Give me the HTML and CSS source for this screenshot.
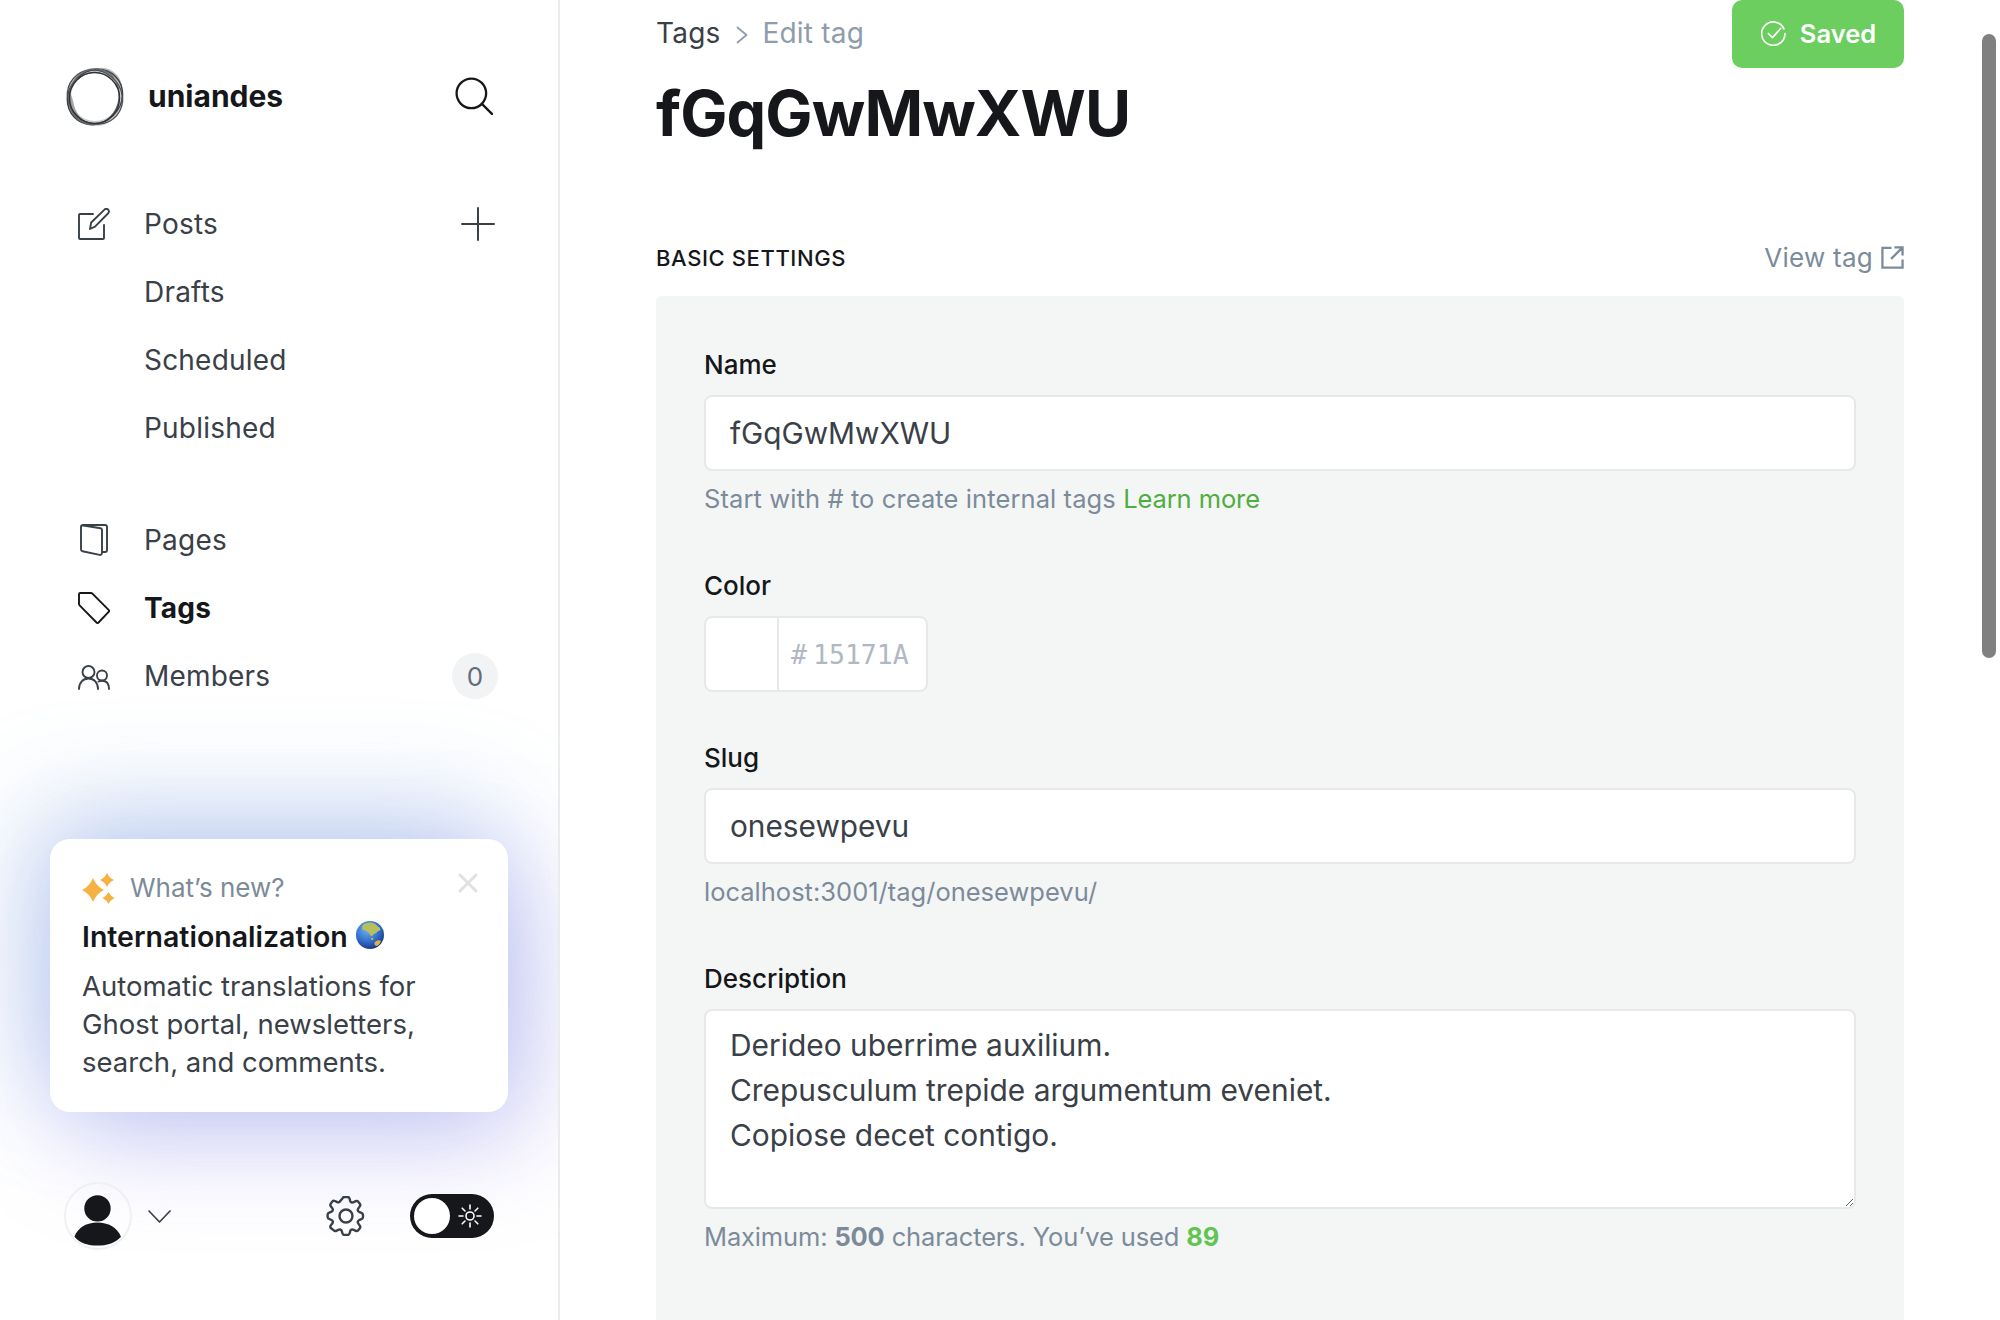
FILE: index.html
```html
<!DOCTYPE html>
<html lang="en">
<head>
    <meta charset="UTF-8">
    <meta name="viewport" content="width=device-width, initial-scale=1.0">
    <title>Edit tag</title>
    <link rel="stylesheet" href="styles.css">
</head>
<body>
    <div class="app">
        <aside class="sidebar">
            <div class="brand">
                <svg class="logo" viewBox="0 0 62 62" fill="none">
                    <path d="M30 5c6-4 15-3 22 4 4 4 6 9 6 14-3-7-8-12-13-14-5-2-10-3-15-4z" fill="#b4b6b8"/>
                    <path d="M4 24c-3 10-1 20 6 28 4 4 9 6 14 7-7-5-12-11-14-19-1-6-3-11-6-16z" fill="#a6a8aa"/>
                    <ellipse cx="31" cy="32" rx="26.500" ry="26.500" stroke="#8a8c8f" stroke-width="5" opacity="0.450"/>
                    <ellipse cx="31" cy="32" rx="29" ry="26" stroke="#3d4043" stroke-width="1.300" transform="rotate(-45 31 32)"/>
                    <ellipse cx="31" cy="32" rx="28.500" ry="26" stroke="#4b4e52" stroke-width="1.300" transform="rotate(40 31 32)"/>
                    <ellipse cx="30" cy="32" rx="25" ry="28" stroke="#66696c" stroke-width="1.300" transform="rotate(15 31 32)"/>
                    <ellipse cx="30.500" cy="33" rx="25" ry="25.500" stroke="#2f3235" stroke-width="1.400"/>
                </svg>
                <span class="brand-name">uniandes</span>
                <svg class="search-icon" viewBox="0 0 36 36" fill="none" stroke="#15171a" stroke-width="2.200" stroke-linecap="round">
                    <circle cx="15.500" cy="15.500" r="14"/>
                    <path d="M25.500 25.500 35 35"/>
                </svg>
            </div>

            <ul class="nav nav-first">
                <li class="nav-item">
                    <svg class="nav-icon" viewBox="0 0 32 32" fill="none" stroke="#394047" stroke-width="1.900" stroke-linecap="round" stroke-linejoin="round">
                        <path d="M15 6H2a1 1 0 0 0-1 1v23a1 1 0 0 0 1 1h23a1 1 0 0 0 1-1V17"/>
                        <path d="M12 21l1.200-6.500L26.500 1.600a2.600 2.600 0 0 1 3.700 0 2.600 2.600 0 0 1 0 3.700L17 18.600z"/>
                    </svg>
                    <span class="nav-label">Posts</span>
                    <svg class="plus-icon" viewBox="0 0 34 34" fill="none" stroke="#394047" stroke-width="2" stroke-linecap="round">
                        <path d="M17 1v32M1 17h32"/>
                    </svg>
                </li>
                <li class="nav-item"><span class="nav-label">Drafts</span></li>
                <li class="nav-item"><span class="nav-label">Scheduled</span></li>
                <li class="nav-item"><span class="nav-label">Published</span></li>
            </ul>

            <ul class="nav nav-second">
                <li class="nav-item">
                    <svg class="nav-icon" viewBox="0 0 32 32" fill="none" stroke="#394047" stroke-width="1.900" stroke-linecap="round" stroke-linejoin="round">
                        <path d="M5 1h22a2 2 0 0 1 2 2v23a2 2 0 0 1-2 2h-3"/>
                        <path d="M4 1.300l18.600 3a1.500 1.500 0 0 1 1.400 1.500V29a2 2 0 0 1-2.400 1.900L4.500 27.200A1.800 1.800 0 0 1 3 25.400V2.300a1 1 0 0 1 1-1z"/>
                    </svg>
                    <span class="nav-label">Pages</span>
                </li>
                <li class="nav-item">
                    <svg class="nav-icon" viewBox="0 0 32 32" fill="none" stroke="#15171a" stroke-width="1.900" stroke-linejoin="round">
                        <path d="M2.200 1H13a2 2 0 0 1 1.400.6l16.200 16.200a1.500 1.500 0 0 1 0 2.100L20.600 30.500a1.500 1.500 0 0 1-2.100 0L1.600 13.400A2 2 0 0 1 1 12V2.200A1.200 1.200 0 0 1 2.200 1z"/>
                    </svg>
                    <span class="nav-label nav-active">Tags</span>
                </li>
                <li class="nav-item">
                    <svg class="nav-icon" viewBox="0 0 32 32" fill="none" stroke="#394047" stroke-width="1.900" stroke-linecap="round">
                        <circle cx="10.500" cy="12" r="6"/>
                        <path d="M1 29c0-6.500 4-10.500 9.500-10.500S20 22.500 20 29"/>
                        <circle cx="24" cy="15.500" r="5"/>
                        <path d="M20.500 21.500c1-.5 2.200-.8 3.500-.8 4.500 0 7 3.300 7 8.300"/>
                    </svg>
                    <span class="nav-label">Members</span>
                    <span class="count">0</span>
                </li>
            </ul>

            <div class="news-card">
                <div class="news-top">
                    <svg class="sparkle" viewBox="0 0 33 32" fill="#f6b143">
                        <path d="M11 5Q14.500 13.500 22 17 14.500 20.500 11 29 7.500 20.500 0 17 7.500 13.500 11 5z"/>
                        <path d="M25 0Q27.200 4.800 32 7 27.200 9.200 25 14 22.800 9.200 18 7 22.800 4.800 25 0z"/>
                        <path d="M26.500 19Q28.500 23 32.500 25 28.500 27 26.500 31 24.500 27 20.500 25 24.500 23 26.500 19z"/>
                    </svg>
                    <span class="news-kicker">What’s new?</span>
                    <svg class="close-icon" viewBox="0 0 20 20" fill="none" stroke="#dfe1e3" stroke-width="3" stroke-linecap="round">
                        <path d="M2 2l16 16M18 2 2 18"/>
                    </svg>
                </div>
                <div class="news-title">
                    Internationalization
                    <svg class="globe" viewBox="0 0 28 28">
                        <defs>
                            <radialGradient id="sea" cx="40%" cy="30%" r="75%">
                                <stop offset="0" stop-color="#6fb4f2"/>
                                <stop offset="0.6" stop-color="#2f6cc8"/>
                                <stop offset="1" stop-color="#17307c"/>
                            </radialGradient>
                        </defs>
                        <circle cx="14" cy="14" r="14" fill="url(#sea)"/>
                        <path d="M8 3c4-2 8-2 11 0 2 1 3 3 5 4 1 2 0 3-2 3-1 2-3 2-4 3l-2 2c-2 0-2-2-3-3-2-1-3-3-5-3-1 0-2 0-2-2s1-3 2-4z" fill="#b7bf5e"/>
                        <path d="M15 17c2-1 3 1 2 2-1 0-2 0-2-2zM19 21c2-2 5-2 6-1-1 3-3 5-5 5-2-1-2-3-1-4z" fill="#dcae4e"/>
                    </svg>
                </div>
                <p class="news-text">Automatic translations for<br>Ghost portal, newsletters,<br>search, and comments.</p>
            </div>

            <div class="user-bar">
                <div class="avatar">
                    <svg viewBox="0 0 68 68">
                        <circle cx="34.500" cy="27" r="14" fill="#15171a"/>
                        <path d="M10 57c4-10 13-15 24.500-15S55 47 59.500 57C53 64 44 66.500 34.500 66.500S16 64 10 57z" fill="#15171a"/>
                    </svg>
                </div>
                <svg class="chevron" viewBox="0 0 23 13" fill="none" stroke="#394047" stroke-width="1.700" stroke-linecap="round" stroke-linejoin="round">
                    <path d="M1 1l10.500 11L22 1"/>
                </svg>
                <svg class="gear" viewBox="0 0 40 40" fill="none" stroke="#394047" stroke-width="2.400" stroke-linejoin="round">
                    <circle cx="20" cy="20" r="6.500"/>
                    <path d="M16.500 2.500c.3-1 1-1.500 2-1.500h3c1 0 1.700.5 2 1.500l.8 2.600c.4 1.200 1.800 1.800 3 1.200l2.400-1.100c1-.4 1.800-.3 2.500.4l1.600 2.200c.6.800.6 1.800 0 2.600l-1.600 2.200c-.8 1.100-.4 2.600.8 3.200l2.400 1c1 .4 1.600 1.100 1.600 2.200v2c0 1-.6 1.800-1.600 2.200l-2.400 1c-1.200.6-1.600 2.100-.8 3.200l1.600 2.200c.6.800.6 1.800 0 2.600l-1.600 2.200c-.7.700-1.500.8-2.500.4l-2.400-1.100c-1.200-.6-2.600 0-3 1.200l-.8 2.600c-.3 1-1 1.500-2 1.500h-3c-1 0-1.700-.5-2-1.500l-.8-2.600c-.4-1.200-1.800-1.800-3-1.200l-2.400 1.100c-1 .4-1.800.3-2.500-.4L4.800 32c-.6-.8-.6-1.800 0-2.600l1.600-2.200c.8-1.100.4-2.600-.8-3.200l-2.400-1C2.200 22.600 1.600 21.800 1.600 20.800v-2c0-1 .6-1.800 1.600-2.200l2.400-1c1.200-.6 1.600-2.100.8-3.200L4.800 10.200c-.6-.8-.6-1.800 0-2.600l1.600-2.200c.7-.7 1.500-.8 2.500-.4l2.400 1.100c1.200.6 2.600 0 3-1.200z"/>
                </svg>
                <div class="theme-toggle">
                    <span class="knob"></span>
                    <svg class="sun" viewBox="0 0 24 24" fill="none" stroke="#fff" stroke-width="1.600" stroke-linecap="round">
                        <circle cx="12" cy="12" r="4"/>
                        <path d="M12 1v4M12 19v4M1 12h4M19 12h4M4.200 4.200l2.800 2.800M17 17l2.800 2.800M4.200 19.800 7 17M17 7l2.800-2.800"/>
                    </svg>
                </div>
            </div>
        </aside>

        <main class="main">
            <div class="top-row">
                <div class="crumbs">
                    <span class="crumb-link">Tags</span>
                    <svg class="crumb-arrow" viewBox="0 0 12 18" fill="none" stroke="#8e9cac" stroke-width="1.800" stroke-linecap="round" stroke-linejoin="round">
                        <path d="M1.500 1.500 10.500 9l-9 7.500"/>
                    </svg>
                    <span class="crumb-current">Edit tag</span>
                </div>
                <div class="saved-btn">
                    <svg class="check-icon" viewBox="0 0 24 24" fill="none" stroke="#fff" stroke-width="1.600" stroke-linecap="round" stroke-linejoin="round">
                        <path d="M22 7.500A11.200 11.200 0 1 0 23 12"/>
                        <path d="M7 12l4 4 8-9"/>
                    </svg>
                    Saved
                </div>
            </div>
            <h1 class="title">fGqGwMwXWU</h1>

            <div class="section-head">
                <h4 class="section-title">BASIC SETTINGS</h4>
                <span class="view-link">
                    View tag
                    <svg class="ext-icon" viewBox="0 0 24 24" fill="none" stroke="#7c8b9a" stroke-width="2.400">
                        <path d="M11 2H1.500v20.500h21V14M14 1.500h8.500V10M22.500 1.500 10.500 13.500"/>
                    </svg>
                </span>
            </div>

            <section class="panel">
                <div class="field">
                    <label class="field-label">Name</label>
                    <input class="text-input" type="text" value="fGqGwMwXWU">
                    <p class="hint hint-wide">Start with # to create internal tags <span class="green-link">Learn more</span></p>
                </div>
                <div class="field field-color">
                    <label class="field-label">Color</label>
                    <div class="color-box">
                        <div class="swatch"></div>
                        <div class="hex"><span>#</span><span>15171A</span></div>
                    </div>
                </div>
                <div class="field">
                    <label class="field-label">Slug</label>
                    <input class="text-input" type="text" value="onesewpevu">
                    <p class="hint">localhost:3001/tag/onesewpevu/</p>
                </div>
                <div class="field">
                    <label class="field-label">Description</label>
                    <textarea class="text-area">Derideo uberrime auxilium.
Crepusculum trepide argumentum eveniet.
Copiose decet contigo.</textarea>
                    <p class="hint hint-count">Maximum: <b>500</b> characters. You’ve used <b class="used">89</b></p>
                </div>
            </section>
        </main>

        <div class="scroll-track"><div class="scroll-thumb"></div></div>
    </div>
</body>
</html>
```

FILE: styles.css
```css
* {
    box-sizing: border-box;
}
html, body {
    margin: 0;
    height: 1320px;
    overflow: hidden;
    background: #fff;
}
body {
    font-family: Inter, "Liberation Sans", sans-serif;
    color: #15171a;
}
.app {
    display: flex;
    height: 1320px;
}

/* sidebar */
.sidebar {
    width: 560px;
    flex: none;
    height: 1320px;
    border-right: 2px solid #e9ebed;
    overflow: hidden;
    padding: 60px 60px 0 50px;
    display: flex;
    flex-direction: column;
}
.brand {
    display: flex;
    align-items: center;
    height: 72px;
    padding-left: 14px;
}
.logo {
    width: 62px;
    height: 62px;
    flex: none;
}
.brand-name {
    font-size: 30px;
    font-weight: 700;
    margin-left: 22px;
    flex: 1;
}
.search-icon {
    width: 38px;
    height: 38px;
    margin-right: 5px;
}
.nav {
    list-style: none;
    margin: 0;
    padding: 0;
}
.nav-first {
    margin-top: 58px;
}
.nav-second {
    margin-top: 44px;
}
.nav-item {
    display: flex;
    align-items: center;
    height: 68px;
    padding-left: 94px;
    position: relative;
}
.nav-icon {
    position: absolute;
    left: 28px;
    top: 18px;
    width: 32px;
    height: 32px;
}
.nav-label {
    font-size: 28px;
    letter-spacing: 0.2px;
    color: #394047;
    flex: 1;
}
.nav-active {
    font-weight: 700;
    color: #15171a;
}
.plus-icon {
    width: 34px;
    height: 34px;
    margin-right: 3px;
}
.count {
    width: 46px;
    height: 46px;
    border-radius: 50%;
    background: #f1f3f4;
    color: #626d79;
    font-size: 26px;
    display: flex;
    align-items: center;
    justify-content: center;
}
.news-card {
    margin-top: 129px;
    width: 458px;
    height: 273px;
    border-radius: 20px;
    background: #fff;
    padding: 31px 32px;
    box-shadow: -18px -26px 105px rgba(120, 165, 225, 0.42), 20px 26px 105px rgba(150, 135, 235, 0.42);
    flex: none;
}
.news-top {
    display: flex;
    align-items: center;
    height: 34px;
}
.sparkle {
    width: 33px;
    height: 32px;
    margin-top: 4px;
}
.news-kicker {
    font-size: 26px;
    color: #7c8b9a;
    margin-left: 15px;
    flex: 1;
}
.close-icon {
    width: 20px;
    height: 20px;
    margin: -8px -2px 0 0;
}
.news-title {
    display: flex;
    align-items: center;
    gap: 8px;
    font-size: 28.500px;
    font-weight: 600;
    margin-top: 15px;
    height: 34px;
}
.globe {
    width: 28px;
    height: 28px;
    margin-top: -3px;
}
.news-text {
    margin: 14px 0 0;
    font-size: 27.500px;
    line-height: 38px;
    color: #394047;
}
.user-bar {
    display: flex;
    align-items: center;
    margin-top: 70px;
    padding-left: 14px;
    height: 68px;
}
.avatar {
    width: 68px;
    height: 68px;
    border-radius: 50%;
    border: 2px solid #eef0f1;
    overflow: hidden;
    flex: none;
}
.avatar svg {
    display: block;
    width: 100%;
    height: 100%;
    margin: -1px 0 0 -1px;
}
.chevron {
    width: 23px;
    height: 13px;
    margin-left: 16px;
}
.gear {
    width: 40px;
    height: 40px;
    margin-left: 155px;
}
.theme-toggle {
    width: 84px;
    height: 44px;
    margin-left: 44px;
    border-radius: 22px;
    background: #15171a;
    display: flex;
    align-items: center;
    padding-left: 4px;
    flex: none;
}
.knob {
    width: 36px;
    height: 36px;
    border-radius: 50%;
    background: #fff;
}
.sun {
    width: 24px;
    height: 24px;
    margin-left: 8px;
}

/* main column */
.main {
    flex: none;
    width: 1248px;
    height: 1320px;
    margin-left: 96px;
    overflow: hidden;
}
.top-row {
    display: flex;
    justify-content: space-between;
    align-items: flex-start;
    height: 68px;
}
.crumbs {
    display: flex;
    align-items: center;
    height: 66px;
    font-size: 28px;
    letter-spacing: 0.2px;
}
.crumb-link {
    color: #394047;
}
.crumb-arrow {
    width: 12px;
    height: 18px;
    margin: 3px 15px 0 15px;
}
.crumb-current {
    color: #8e9cac;
}
.saved-btn {
    width: 172px;
    height: 68px;
    padding-bottom: 2px;
    background: #6bce5e;
    border-radius: 10px;
    color: #fff;
    font-size: 25.500px;
    font-weight: 600;
    display: flex;
    align-items: center;
    justify-content: center;
    gap: 14px;
}
.check-icon {
    width: 25px;
    height: 25px;
    margin-left: 1px;
}
.title {
    margin: 5px 0 0;
    font-size: 63px;
    font-weight: 700;
    line-height: 80px;
    letter-spacing: -0.900px;
}
.section-head {
    display: flex;
    justify-content: space-between;
    align-items: center;
    margin-top: 91px;
    height: 28px;
}
.section-title {
    margin: 0;
    font-size: 22px;
    font-weight: 500;
    letter-spacing: 0.600px;
}
.view-link {
    display: flex;
    align-items: center;
    gap: 8px;
    padding-bottom: 2px;
    font-size: 26px;
    letter-spacing: 0.250px;
    color: #7c8b9a;
}
.ext-icon {
    width: 23px;
    height: 23px;
}
.panel {
    margin-top: 24px;
    background: #f4f6f6;
    border-radius: 6px 6px 0 0;
    padding: 54px 48px 0;
    height: 1024px;
}
.field {
    margin-bottom: 57px;
}
.field-color {
    margin-bottom: 51px;
}
.field-label {
    display: block;
    font-size: 26px;
    font-weight: 500;
    line-height: 30px;
    margin-bottom: 15px;
}
.text-input,
.text-area {
    display: block;
    width: 100%;
    border: 2px solid #e6e8ea;
    border-radius: 8px;
    background: #fff;
    padding: 0 24px;
    font-family: Inter, "Liberation Sans", sans-serif;
    font-size: 29.800px;
    color: #394047;
    outline: none;
}
.text-input {
    height: 76px;
}
.text-area {
    height: 200px;
    padding-top: 12px;
    font-size: 29.900px;
    line-height: 45px;
    resize: vertical;
}
.hint {
    margin: 13px 0 0;
    font-size: 25.500px;
    line-height: 30px;
    color: #7c8b9a;
}
.hint-wide {
    letter-spacing: 0.100px;
}
.hint-count {
    letter-spacing: -0.150px;
}
.hint b {
    font-weight: 700;
}
.green-link {
    color: #4fae40;
    letter-spacing: -0.100px;
}
.used {
    color: #62c553;
}
.color-box {
    display: flex;
    width: 224px;
    height: 76px;
    border: 2px solid #e6e8ea;
    border-radius: 8px;
    background: #fff;
    overflow: hidden;
}
.swatch {
    width: 73px;
    border-right: 2px solid #e6e8ea;
}
.hex {
    display: flex;
    align-items: center;
    padding-left: 12px;
    gap: 6px;
    font-family: "DejaVu Sans Mono", monospace;
    font-size: 26.500px;
    color: #b0b8c4;
}

/* fake scrollbar */
.scroll-track {
    width: 18px;
    margin-left: auto;
    height: 1320px;
    padding: 34px 4px 0 0;
    background: #fff;
}
.scroll-thumb {
    height: 624px;
    border-radius: 7px;
    background: #808080;
}
```
